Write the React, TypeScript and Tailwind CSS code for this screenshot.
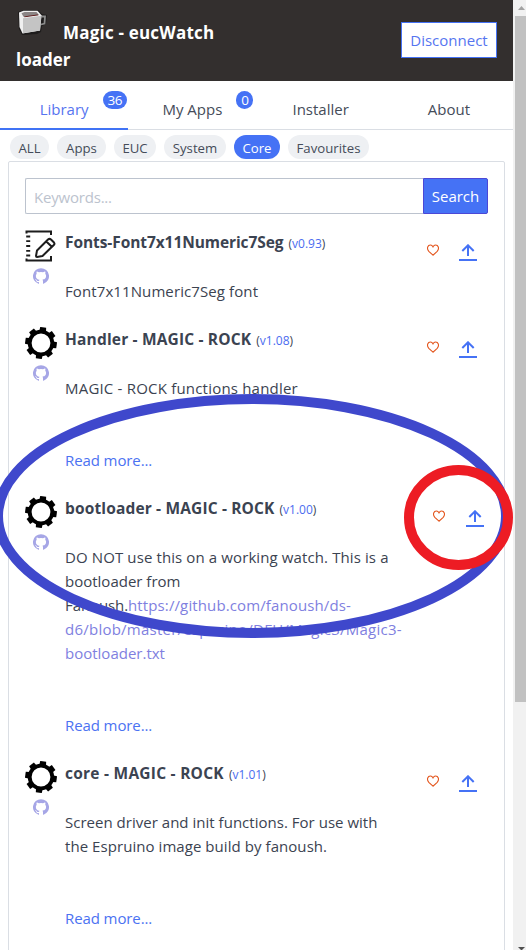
import type { ReactNode } from 'react';

const GITHUB =
  'M12 .3a12 12 0 0 0-3.8 23.4c.6.1.8-.3.8-.6v-2c-3.3.7-4-1.6-4-1.6-.6-1.4-1.4-1.8-1.4-1.8-1-.7.1-.7.1-.7 1.2 0 1.9 1.2 1.9 1.2 1 1.8 2.8 1.3 3.5 1 0-.8.4-1.3.7-1.6-2.7-.3-5.5-1.3-5.5-6 0-1.2.5-2.3 1.3-3.1-.2-.4-.6-1.6 0-3.2 0 0 1-.3 3.4 1.2a11.5 11.5 0 0 1 6 0c2.3-1.5 3.3-1.2 3.3-1.2.6 1.6.2 2.8 0 3.2.9.8 1.3 1.9 1.3 3.2 0 4.6-2.8 5.6-5.5 5.9.5.4.9 1 .9 2.2v3.3c0 .3.1.7.8.6A12 12 0 0 0 12 .3';

function GearIcon() {
  const teeth = [8, 53, 98, 143, 188, 233, 278, 323];
  return (
    <svg className="size-8 shrink-0" viewBox="0 0 32 32">
      <circle cx="16" cy="16" r="11.3" fill="none" stroke="#000" strokeWidth="3.8" />
      {teeth.map((a) => (
        <path key={a} d="M12.6 4.6L13 0.2H19L19.4 4.6Z" transform={`rotate(${a} 16 16)`} />
      ))}
    </svg>
  );
}

function NotebookIcon() {
  return (
    <svg className="size-8 shrink-0" viewBox="0 0 32 32" fill="none" stroke="#1c1c1c" strokeWidth="2">
      <path d="M1.5 3.5V1.5H26V5M26 26V30.5H1.5V28.5" />
      <path d="M1.2 6.5h4M1.2 11.2h4M1.2 16h4M1.2 20.8h4M1.2 25.5h4" strokeWidth="1.8" />
      <path
        d="M12 20.5L23 9.5Q24.5 8.2 26 9.5L29 12.5Q30 13.8 28.8 15L17.5 26L12 27Q11 27 11 26Z M21.3 11.5L26.8 16.8"
        strokeLinejoin="round"
      />
    </svg>
  );
}

function MugIcon() {
  return (
    <svg className="h-[30px] w-8 shrink-0" viewBox="0 0 32 30">
      <path d="M2 3L8 1H22L26 5L31 6L30 15L26 17L25 23L21 25L6 26L3 20Z" fill="#1e1c1c" />
      <path d="M25.5 7.5H29L28.5 14.5L25 15.5" fill="none" stroke="#8c8c8c" strokeWidth="1.8" />
      <path d="M3 3.5L7.5 1.8H21.5L25.5 6.2L24 21.5L6.5 24.5L3.5 18Z" fill="#f0f0f0" />
      <path d="M5.5 4.2L8.5 3H20.5L23 6L7.5 7.8Z" fill="#8b8585" />
      <path d="M8 7.6L11 7L21.5 5.6L22.5 6.3L8.5 8.2Z" fill="#5a1414" />
      <path d="M7 9.3L25.4 6.8L24 21.5L7 24.3Z" fill="#c4c4c4" />
    </svg>
  );
}

function Actions({ shifted }: { shifted?: boolean }) {
  return (
    <div className={shifted ? 'ml-auto mr-[4px] flex pt-[14px]' : 'ml-auto mr-[11px] flex pt-[14px]'}>
      <svg
        className={`${shifted ? 'mr-[21px]' : 'mr-[20px]'} h-[12px] w-[12px]`}
        viewBox="0 0 12 12"
        fill="none"
        stroke="#e4571f"
        strokeWidth="1.1"
      >
        <path d="M6 11.2L1.8 7.3C-.8 4.3 1 1 3.3 1C5 1 6 2.7 6 3.4C6 2.7 7 1 8.7 1C11 1 12.8 4.3 10.2 7.3Z" />
      </svg>
      <svg className="h-[17px] w-[18px]" viewBox="0 0 18 17" fill="none" stroke="#4572f5" strokeWidth="2">
        <path d="M9 12V1M3.3 7L9 1.3L14.7 7M0 16H18" />
      </svg>
    </div>
  );
}

interface AppRowProps {
  height: string;
  icon: ReactNode;
  title: string;
  titleClass: string;
  version: string;
  more?: boolean;
  shifted?: boolean;
  children: ReactNode;
}

function AppRow({ height, icon, title, titleClass, version, more, shifted, children }: AppRowProps) {
  return (
    <article className={`flex ${height}`}>
      <div className="flex w-8 shrink-0 flex-col items-center">
        {icon}
        <svg className="mt-[6px] size-4" viewBox="0 0 24 24" fill="#a6a6e6">
          <path d={GITHUB} />
        </svg>
      </div>
      <div className="ml-2 w-[342px] shrink-0 whitespace-nowrap">
        <h2 className="flex h-[25px] items-baseline gap-[5px] leading-[25px]">
          <span className={`text-[15.5px] font-bold ${titleClass}`}>{title}</span>
          <small className="text-[12px]">
            (<a className="text-[#4b6cf0]">{version}</a>)
          </small>
        </h2>
        <div className="mt-6">{children}</div>
        {more && <a className="mt-12 block tracking-[-0.1px] text-[#4b72f2]">Read more...</a>}
      </div>
      <Actions shifted={shifted} />
    </article>
  );
}

function Tab({ label, count, active }: { label: string; count?: string; active?: boolean }) {
  return (
    <a
      className={`flex flex-1 justify-center pt-[16px] ${active ? 'border-b-2 border-[#4073f5] text-[#5675f0]' : 'border-b border-[#dadee4] text-[#454c59]'}`}
    >
      <span className="relative">
        {label}
        {count && (
          <span className="absolute left-full top-[-6px] ml-[14px] h-[18px] rounded-full bg-[#4572f5] px-[5px] text-[13.5px] leading-[18px] tracking-[-0.6px] text-white">
            {count}
          </span>
        )}
      </span>
    </a>
  );
}

const chips = [
  { label: 'ALL', width: 'w-[39px]' },
  { label: 'Apps', width: 'w-[49px]' },
  { label: 'EUC', width: 'w-[42px]' },
  { label: 'System', width: 'w-[62px]' },
  { label: 'Core', width: 'w-[46px]', active: true },
  { label: 'Favourites', width: 'w-[81px]' },
];

export default function App() {
  return (
    <div className="relative flex h-[950px] w-[526px] overflow-hidden bg-white font-['Open_Sans',sans-serif] text-[15px] leading-6 text-[#3b4351]">
      <main className="flex w-[513px] flex-col">
        <header className="flex h-[81px] shrink-0 items-start justify-between bg-[#332f2e] pl-4 pr-4">
          <div className="flex h-full flex-col whitespace-nowrap text-[17px] font-bold leading-[27px] text-white">
            <div className="flex h-[46px]">
              <span className="pt-[9px]">
                <MugIcon />
              </span>
              <span className="ml-[15px] pt-[19px] tracking-[0.2px]">Magic - eucWatch</span>
            </div>
            <span>loader</span>
          </div>
          <button className="mt-[22px] h-9 w-24 border border-[#4572f5] bg-white text-[#5675f0]">Disconnect</button>
        </header>

        <nav className="flex h-[49px] shrink-0">
          <Tab label="Library" count="36" active />
          <Tab label="My Apps" count="0" />
          <Tab label="Installer" />
          <Tab label="About" />
        </nav>

        <div className="mt-[5px] flex shrink-0 gap-2 pl-[10px] text-[13.2px]">
          {chips.map((c) => (
            <span
              key={c.label}
              className={`h-6 rounded-full text-center leading-[26px] ${c.width} ${c.active ? 'bg-[#4572f5] text-white' : 'bg-[#eef0f3] text-[#454c59]'}`}
            >
              {c.label}
            </span>
          ))}
        </div>

        <section className="ml-2 mt-[2px] h-[800px] w-[497px] shrink-0 rounded-t-[2px] border border-[#dadee4] px-4 pt-4">
          <div className="flex h-9">
            <div className="flex-1 rounded-l-[2px] border border-r-0 border-[#bcc3ce] pl-2 pt-[6px] tracking-[-0.2px] text-[#bcc3ce]">Keywords...</div>
            <button className="w-[65px] rounded-r-[2px] border border-[#4b48d6] bg-[#4572f5] text-white">Search</button>
          </div>

          <div className="mt-4">
            <AppRow height="h-[97px]" icon={<NotebookIcon />} title="Fonts-Font7x11Numeric7Seg" titleClass="tracking-[-0.08px]" version="v0.93">
              <p className="tracking-[0.1px]">Font7x11Numeric7Seg font</p>
            </AppRow>
            <AppRow height="h-[169px]" icon={<GearIcon />} title="Handler - MAGIC - ROCK" titleClass="tracking-[0.17px]" version="v1.08" more>
              <p className="tracking-[0.2px]">MAGIC - ROCK functions handler</p>
            </AppRow>
            <AppRow height="h-[265px]" icon={<GearIcon />} title="bootloader - MAGIC - ROCK" titleClass="tracking-[0.15px]" version="v1.00" more shifted>
              <p className="tracking-[0.11px]">DO NOT use this on a working watch. This is a</p>
              <p>bootloader from</p>
              <p>
                <span className="tracking-[-0.1px]">Fanoush.</span>
                <a className="tracking-[0.12px] text-[#807fdf]">https://github.com/fanoush/ds-</a>
              </p>
              <p className="tracking-[0.24px] text-[#807fdf]">d6/blob/master/espruino/DFU/Magic3/Magic3-</p>
              <p className="text-[#807fdf]">bootloader.txt</p>
            </AppRow>
            <AppRow height="h-[180px]" icon={<GearIcon />} title="core - MAGIC - ROCK" titleClass="tracking-[0.25px]" version="v1.01" more>
              <p className="tracking-[0.02px]">Screen driver and init functions. For use with</p>
              <p className="tracking-[0.06px]">the Espruino image build by fanoush.</p>
            </AppRow>
          </div>
        </section>
      </main>

      <aside className="flex w-[13px] flex-col bg-[#f1f1f1] pl-[2px]">
        <svg className="h-4 w-[11px]" viewBox="0 0 11 16">
          <path d="M3 10L6.5 6L10 10Z" fill="#a3a3a3" />
        </svg>
        <div className="h-[686px] bg-[#c1c1c1]" />
        <svg className="mt-auto h-[3px] w-[11px]" viewBox="0 0 11 3">
          <path d="M3 0H10L7 3H6Z" fill="#505050" />
        </svg>
      </aside>

      <svg className="pointer-events-none absolute inset-0" width="526" height="950" fill="none" strokeWidth="10">
        <ellipse cx="252" cy="516" rx="254" ry="117" stroke="#3f48cc" />
        <ellipse cx="458.5" cy="517.5" rx="49.5" ry="47.5" stroke="#ed1c24" />
      </svg>
    </div>
  );
}
